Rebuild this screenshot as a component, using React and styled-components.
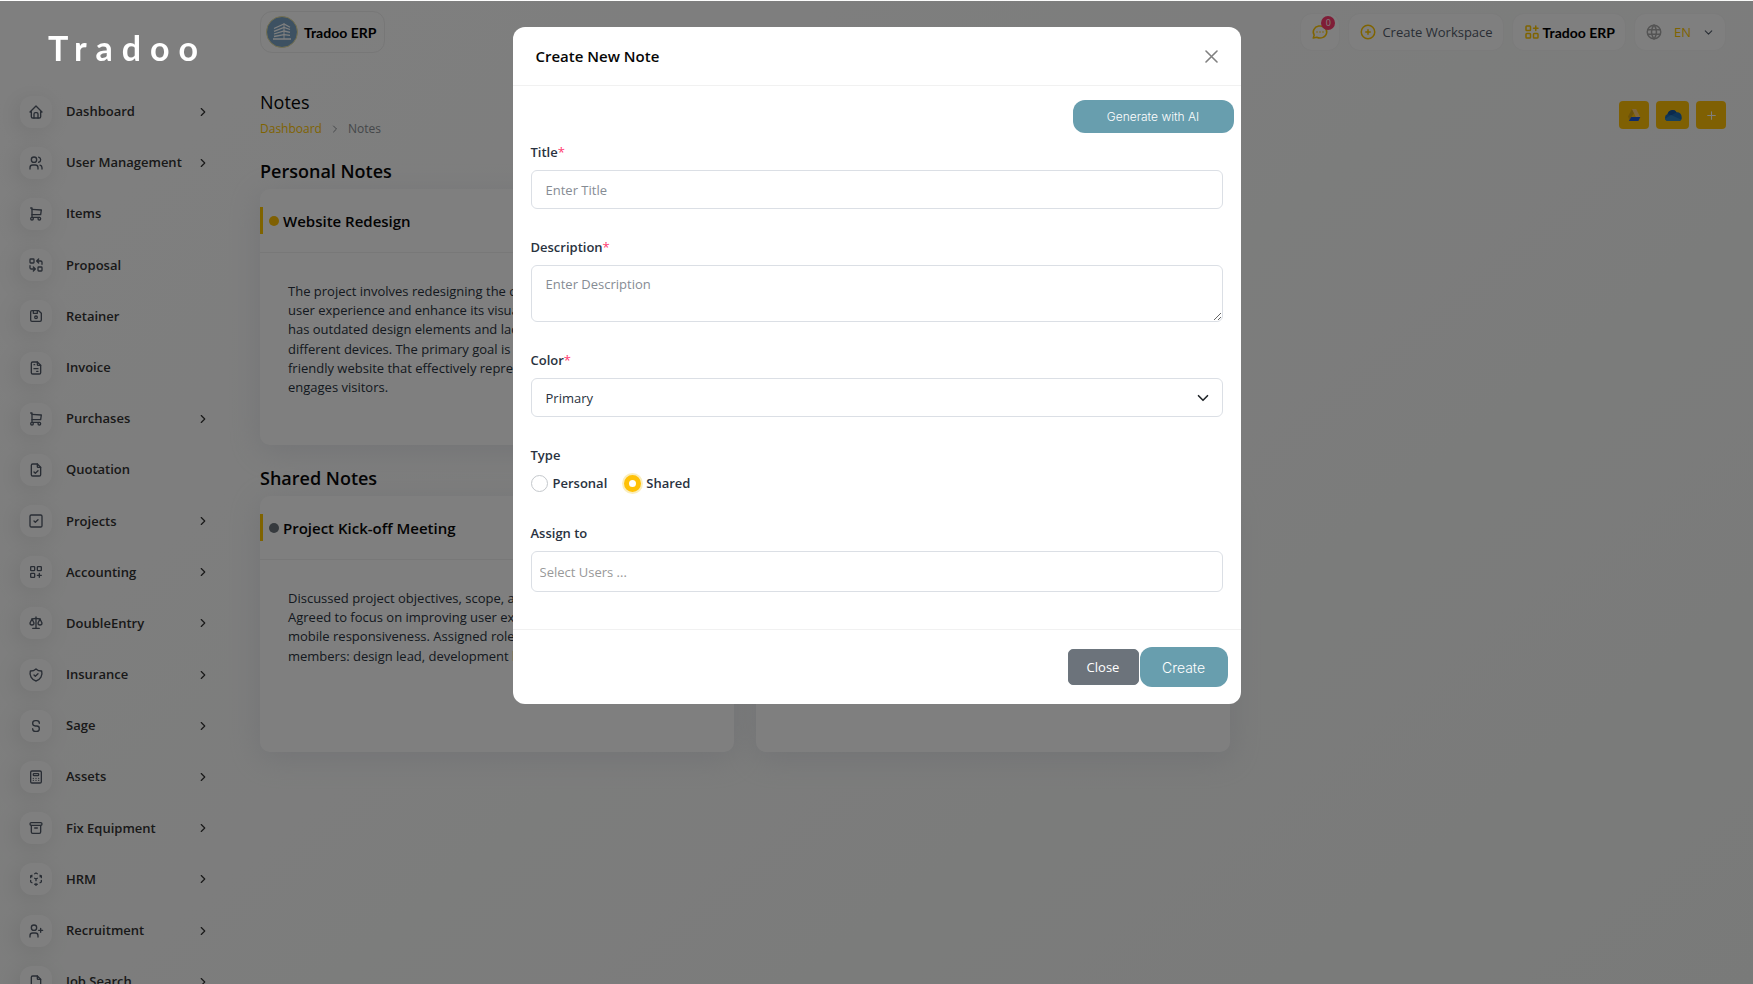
import React, { useState } from 'react';
import styled, { createGlobalStyle } from 'styled-components';
import {
  TbHome,
  TbUsers,
  TbShoppingCart,
  TbReplace,
  TbDeviceFloppy,
  TbFileInvoice,
  TbFileCheck,
  TbSquareCheck,
  TbLayoutGridAdd,
  TbScale,
  TbLetterS,
  TbCalculator,
  TbArchive,
  TbFile,
  TbChevronRight,
  TbChevronDown,
  TbCirclePlus,
  TbApps,
  TbWorld,
  TbPlus,
} from 'react-icons/tb';

const GlobalStyle = createGlobalStyle`
  * {
    box-sizing: border-box;
  }

  body {
    margin: 0;
    font-family: 'Open Sans', 'Noto Sans', sans-serif;
    font-size: 13px;
    color: #293240;
    background-color: #f4fbf7;
  }

  button, input, select, textarea {
    font-family: inherit;
    font-size: 13px;
  }

  h1, h2, h3, p, ul, ol {
    margin: 0;
    padding: 0;
    font-weight: 400;
  }
`;

const Shell = styled.div`
  display: flex;
  height: 100vh;
  overflow: hidden;
  background: linear-gradient(141deg, #ffffff 4%, #f3f5f3 100%);
`;

const Sidebar = styled.aside`
  width: 232px;
  flex-shrink: 0;
  padding-left: 20px;
  overflow: hidden;
`;

const Logo = styled.div`
  height: 86px;
  padding: 22px 0 0 28px;
  font-family: Lato, sans-serif;
  font-size: 34px;
  font-weight: 700;
  line-height: 52px;
  letter-spacing: 9px;
  color: #ffffff;
  position: relative;
  z-index: 20;
`;

const NavList = styled.ul`
  list-style: none;
`;

const NavLink = styled.a`
  display: flex;
  align-items: center;
  gap: 14px;
  color: #333333;
  text-decoration: none;
  padding-right: 22px;

  & > svg {
    width: 14px;
    height: 14px;
  }
`;

const NavTile = styled.span`
  display: flex;
  align-items: center;
  justify-content: center;
  width: 32px;
  height: 32px;
  border-radius: 12px;
  background-color: #ffffff;
  color: #525b69;
  box-shadow: -3px 4px 23px rgba(0, 0, 0, 0.1);

  svg {
    width: 16px;
    height: 16px;
  }
`;

const NavText = styled.span`
  flex: 1;
  min-width: 0;
  padding: 16px 0 17px;
  font-weight: 600;
  line-height: 1.4;
  white-space: nowrap;
`;

const Main = styled.main`
  flex: 1;
  min-width: 0;
  padding: 11px 27px 0 28px;
`;

const TopBar = styled.header`
  display: flex;
  align-items: center;
  gap: 8px;
`;

const Pill = styled.button`
  display: flex;
  align-items: center;
  gap: ${(props) => (props.$snug ? 2 : 5)}px;
  height: 38px;
  padding: 0 10px;
  border: 1px solid #f6f6f6;
  border-radius: 12px;
  background-color: ${(props) => (props.$clear ? 'transparent' : '#ffffff')};
  color: #525b69;
  cursor: pointer;

  svg {
    width: 18px;
    height: 18px;
    color: #ffc700;
  }
`;

const CompanyPill = styled(Pill)`
  gap: 6px;
  height: 42px;
  padding: 0 8px 0 5px;
  margin-right: auto;
  border-color: #efefef;

  svg {
    width: 32px;
    height: 32px;
  }
`;

const BrandText = styled.span`
  font-family: Lato, sans-serif;
  font-weight: 700;
  font-size: 14px;
  color: #000000;
`;

const ChatPill = styled(Pill)`
  position: relative;
  width: 40px;
  justify-content: center;
`;

const Badge = styled.span`
  position: absolute;
  top: 2px;
  right: 4px;
  width: 14px;
  height: 14px;
  border-radius: 50%;
  background-color: #ff3a6e;
  color: #ffffff;
  font-size: 9px;
  line-height: 14px;
`;

const LangPill = styled(Pill)`
  gap: 11px;
  color: #ffc700;

  svg:first-child {
    color: #a8a8a8;
  }

  svg:last-child {
    width: 13px;
    height: 13px;
    color: #525b69;
  }
`;

const PageHead = styled.div`
  display: flex;
  justify-content: space-between;
  align-items: center;
  margin-top: 36px;
`;

const PageTitle = styled.h1`
  font-size: 18px;
  font-weight: 500;
  line-height: 27px;
  color: #060606;
`;

const Breadcrumb = styled.ol`
  display: flex;
  align-items: center;
  gap: 7px;
  list-style: none;
  font-size: 12px;
  line-height: 25px;
  color: #8a8f94;

  a {
    color: #ffc700;
    text-decoration: none;
  }

  li {
    display: flex;
  }
`;

const Actions = styled.div`
  display: flex;
  gap: 7px;
`;

const ActionButton = styled.button`
  display: flex;
  align-items: center;
  justify-content: center;
  width: ${(props) => (props.$wide ? 33 : 30)}px;
  height: 28px;
  border: none;
  border-radius: 4px;
  background-color: #ffc107;
  color: #ffffff;
  cursor: pointer;
  padding: 0;
`;

const SectionTitle = styled.h2`
  margin-top: ${(props) => (props.$first ? 15 : 18)}px;
  font-size: 18px;
  font-weight: 600;
  line-height: 30px;
  color: #060606;
`;

const CardGrid = styled.div`
  display: grid;
  grid-template-columns: repeat(3, 1fr);
  gap: 22px;
  margin-top: 3px;
`;

const Card = styled.article`
  height: 256px;
  border-radius: 10px;
  background-color: #ffffff;
  box-shadow: 0 6px 30px rgba(182, 186, 203, 0.3);
`;

const CardHead = styled.div`
  display: flex;
  align-items: center;
  height: 64px;
  border-bottom: 1px solid #f1f1f1;
`;

const CardTitle = styled.h3`
  display: flex;
  align-items: center;
  gap: 4px;
  height: 27px;
  padding-left: 6px;
  border-left: 3px solid #ffc700;
  font-size: 15px;
  font-weight: 600;
  color: #060606;
`;

const Dot = styled.span`
  width: 10px;
  height: 10px;
  border-radius: 50%;
  background-color: ${(props) => props.$color};
`;

const CardText = styled.p`
  padding: 29px 28px 0;
  line-height: 1.48;
  color: #293240;
`;

const Overlay = styled.div`
  position: fixed;
  inset: 1px 0 0;
  z-index: 10;
  padding: 26px 16px;
  background-color: rgba(0, 0, 0, 0.5);
`;

const Modal = styled.div`
  max-width: 728px;
  margin: 0 auto;
  border-radius: 12px;
  background-color: #ffffff;
`;

const ModalHead = styled.div`
  display: flex;
  align-items: center;
  justify-content: space-between;
  height: 59px;
  padding: 0 23px;
  border-bottom: 1px solid #f1f1f1;
`;

const ModalTitle = styled.h2`
  font-size: 15px;
  font-weight: 600;
  color: #060606;
`;

const CloseIcon = styled.button`
  display: flex;
  padding: 0;
  border: none;
  background: none;
  color: #808080;
  cursor: pointer;
`;

const ModalBody = styled.form`
  display: flex;
  flex-direction: column;
  padding: 14px 18px 37px;
`;

const TealButton = styled.button`
  border: none;
  border-radius: 12px;
  background-color: #689eae;
  color: #ffffff;
  font-family: Inter, sans-serif;
  font-weight: 300;
  cursor: pointer;
`;

const GenerateButton = styled(TealButton)`
  align-self: flex-end;
  width: 161px;
  height: 33px;
  margin-right: -11px;
  font-size: 12px;
`;

const Field = styled.div`
  display: flex;
  flex-direction: column;
  margin-top: ${(props) => (props.$first ? 9 : 28)}px;
`;

const Label = styled.label`
  font-weight: 600;
  line-height: 21px;
  margin-bottom: 7px;
  color: #293240;
`;

const Required = styled.span`
  color: #ff3a6e;
  font-weight: 400;
`;

const TextInput = styled.input`
  width: 100%;
  height: ${(props) => (props.$tight ? 41 : 39)}px;
  padding: 0 ${(props) => (props.$tight ? 8 : 14)}px;
  border: 1px solid #dbdfe5;
  border-radius: 6px;
  color: #293240;
  outline: none;

  &::placeholder {
    color: ${(props) => (props.$tight ? '#999999' : '#868c94')};
  }
`;

const TextArea = styled.textarea`
  width: 100%;
  height: 57px;
  padding: 8px 14px;
  border: 1px solid #dbdfe5;
  border-radius: 6px;
  line-height: 20px;
  color: #293240;
  outline: none;
  resize: vertical;

  &::placeholder {
    color: #868c94;
  }
`;

const SelectBox = styled.div`
  position: relative;

  svg {
    position: absolute;
    right: 14px;
    top: 14px;
    pointer-events: none;
  }
`;

const Select = styled.select`
  width: 100%;
  height: 39px;
  padding: 0 14px;
  border: 1px solid #dbdfe5;
  border-radius: 6px;
  background-color: #ffffff;
  color: #293240;
  appearance: none;
`;

const RadioGroup = styled.fieldset`
  border: none;
  margin: 28px 0 2px;
  padding: 0;
  min-width: 0;

  legend {
    padding: 0;
    font-weight: 600;
    line-height: 21px;
  }
`;

const RadioRow = styled.div`
  display: flex;
  gap: 17px;
  margin-top: 7px;
`;

const RadioLabel = styled.label`
  display: flex;
  align-items: center;
  gap: 5px;
  font-weight: 600;
  line-height: 20px;
`;

const Radio = styled.input`
  appearance: none;
  width: 17px;
  height: 17px;
  margin: 0;
  border: 1px solid #c4c8cc;
  border-radius: 50%;
  background-color: #ffffff;

  &:checked {
    border: 5px solid #ffc107;
    box-shadow: 0 0 0 2px #faeebd;
  }
`;

const ModalFoot = styled.div`
  display: flex;
  align-items: center;
  justify-content: flex-end;
  gap: 1px;
  height: 75px;
  padding: 0 13px;
  border-top: 1px solid #f1f1f1;
`;

const CloseButton = styled.button`
  width: 71px;
  height: 36px;
  border: 1px solid #6c757d;
  border-radius: 5px;
  background-color: #6c737b;
  color: #ffffff;
  font-weight: 500;
  cursor: pointer;
`;

const CreateButton = styled(TealButton)`
  width: 88px;
  height: 40px;
  font-size: 14px;
`;

const OutlineIcon = ({ children }) => (
  <svg viewBox="0 0 24 24" fill="none" stroke="currentColor" strokeWidth="2" strokeLinecap="round" strokeLinejoin="round" aria-hidden="true">
    {children}
  </svg>
);

const CubeIcon = () => (
  <OutlineIcon>
    <path d="M6 17.6l-2 -1.1v-2.5M4 10v-2.5l2 -1.1M10 4.1l2 -1.1l2 1.1M18 6.4l2 1.1v2.5M20 14v2.5l-2 1.1M14 19.9l-2 1.1l-2 -1.1" />
    <path d="M12 12l2 -1.1M18 8.6l2 -1.1M12 12v2.5M12 18.5v2.5M12 12l-2 -1.1M6 8.6l-2 -1.1" />
  </OutlineIcon>
);

const ShieldIcon = () => (
  <OutlineIcon>
    <path d="M9 12l2 2l4 -4" />
    <path d="M12 3a12 12 0 0 0 8.5 3a12 12 0 0 1 -8.5 15a12 12 0 0 1 -8.5 -15a12 12 0 0 0 8.5 -3" />
  </OutlineIcon>
);

const UserPlusIcon = () => (
  <OutlineIcon>
    <circle cx="9" cy="7" r="4" />
    <path d="M3 21v-2a4 4 0 0 1 4 -4h4a4 4 0 0 1 4 4v2" />
    <path d="M16 11h6m-3 -3v6" />
  </OutlineIcon>
);

const ChatIcon = () => (
  <OutlineIcon>
    <path d="M3 20l1.3 -3.9a9 8 0 1 1 3.4 2.9l-4.7 1" />
    <path d="M12 12v.01M8 12v.01M16 12v.01" />
  </OutlineIcon>
);

const CompanyLogo = () => (
  <svg viewBox="0 0 32 32" aria-hidden="true">
    <circle cx="16" cy="16" r="15.5" fill="#7ba3c4" stroke="#e8dfa0" strokeWidth="1" />
    <g fill="none" stroke="#ffffff" strokeWidth="1.3">
      <path d="M8 12.5 18 8l6 3.2M8 15.3 18 11.5l6 2M8 18 18 15l6 1.3M8 20.5l10-1.8 6 .6M7 23h18" />
      <path d="M18 7.5V23" strokeWidth="1" />
    </g>
  </svg>
);

const DriveIcon = () => (
  <svg width="14" height="14" viewBox="0 0 14 14" aria-hidden="true">
    <path d="M5 1 1 8.6l1.4 3.4L7.4 4.6z" fill="#d9a514" />
    <path d="M5 1h4.2l4 8H8.8z" fill="#ffcb78" />
    <path d="M4.2 9h9.2l-2 4H1.8z" fill="#1d56d6" />
  </svg>
);

const CloudIcon = () => (
  <svg width="18" height="12" viewBox="0 0 18 12" aria-hidden="true">
    <path d="M3.6 5A5 5 0 0 1 12.6 3.2 4.4 4.4 0 0 1 17.6 8 3 3 0 0 1 15 12H4A3.6 3.6 0 0 1 3.6 5z" fill="#1f6aae" />
    <path d="M3.6 5A5 5 0 0 1 12.6 3.2L7 6.6z" fill="#17549a" />
    <path d="M7 6 17 10.6A3 3 0 0 1 15 12H4a3.6 3.6 0 0 1-3.2-2z" fill="#2f80bd" />
  </svg>
);

const navItems = [
  { name: 'Dashboard', icon: TbHome, more: true },
  { name: 'User Management', icon: TbUsers, more: true },
  { name: 'Items', icon: TbShoppingCart },
  { name: 'Proposal', icon: TbReplace },
  { name: 'Retainer', icon: TbDeviceFloppy },
  { name: 'Invoice', icon: TbFileInvoice },
  { name: 'Purchases', icon: TbShoppingCart, more: true },
  { name: 'Quotation', icon: TbFileCheck },
  { name: 'Projects', icon: TbSquareCheck, more: true },
  { name: 'Accounting', icon: TbLayoutGridAdd, more: true },
  { name: 'DoubleEntry', icon: TbScale, more: true },
  { name: 'Insurance', icon: ShieldIcon, more: true },
  { name: 'Sage', icon: TbLetterS, more: true },
  { name: 'Assets', icon: TbCalculator, more: true },
  { name: 'Fix Equipment', icon: TbArchive, more: true },
  { name: 'HRM', icon: CubeIcon, more: true },
  { name: 'Recruitment', icon: UserPlusIcon, more: true },
  { name: 'Job Search', icon: TbFile, more: true },
];

const CardItem = ({ title, color, text }) => (
  <Card>
    <CardHead>
      <CardTitle>
        <Dot $color={color} />
        {title}
      </CardTitle>
    </CardHead>
    <CardText>{text}</CardText>
  </Card>
);

const NoteModal = () => {
  const [type, setType] = useState('shared');

  return (
    <Overlay>
      <Modal role="dialog" aria-labelledby="modal-title">
        <ModalHead>
          <ModalTitle id="modal-title">Create New Note</ModalTitle>
          <CloseIcon type="button" aria-label="Close dialog">
            <svg width="13" height="13" viewBox="0 0 13 13" fill="none" stroke="currentColor" strokeWidth="1.6" strokeLinecap="round">
              <path d="M1 1l11 11M12 1L1 12" />
            </svg>
          </CloseIcon>
        </ModalHead>
        <ModalBody id="note-form" onSubmit={(e) => e.preventDefault()}>
          <GenerateButton type="button">Generate with AI</GenerateButton>
          <Field $first>
            <Label htmlFor="title">Title<Required>*</Required></Label>
            <TextInput id="title" type="text" placeholder="Enter Title" />
          </Field>
          <Field>
            <Label htmlFor="description">Description<Required>*</Required></Label>
            <TextArea id="description" placeholder="Enter Description" />
          </Field>
          <Field>
            <Label htmlFor="color">Color<Required>*</Required></Label>
            <SelectBox>
              <Select id="color" defaultValue="primary">
                <option value="primary">Primary</option>
              </Select>
              <svg width="12" height="12" viewBox="0 0 16 16" fill="none" stroke="#212529" strokeWidth="2.2" strokeLinecap="round" strokeLinejoin="round">
                <path d="M2 5l6 6 6-6" />
              </svg>
            </SelectBox>
          </Field>
          <RadioGroup>
            <legend>Type</legend>
            <RadioRow>
              <RadioLabel>
                <Radio type="radio" name="type" checked={type === 'personal'} onChange={() => setType('personal')} />
                Personal
              </RadioLabel>
              <RadioLabel>
                <Radio type="radio" name="type" checked={type === 'shared'} onChange={() => setType('shared')} />
                Shared
              </RadioLabel>
            </RadioRow>
          </RadioGroup>
          <Field>
            <Label htmlFor="users">Assign to</Label>
            <TextInput $tight id="users" type="text" placeholder="Select Users ..." />
          </Field>
        </ModalBody>
        <ModalFoot>
          <CloseButton type="button">Close</CloseButton>
          <CreateButton type="submit" form="note-form">Create</CreateButton>
        </ModalFoot>
      </Modal>
    </Overlay>
  );
};

const App = () => {
  return (
    <>
      <GlobalStyle />
      <Shell>
        <Sidebar>
          <Logo>Tradoo</Logo>
          <NavList>
            {navItems.map(({ name, icon: Icon, more }) => (
              <li key={name}>
                <NavLink href="#">
                  <NavTile><Icon /></NavTile>
                  <NavText>{name}</NavText>
                  {more && <TbChevronRight />}
                </NavLink>
              </li>
            ))}
          </NavList>
        </Sidebar>
        <Main>
          <TopBar>
            <CompanyPill type="button" $clear>
              <CompanyLogo />
              <BrandText>Tradoo ERP</BrandText>
            </CompanyPill>
            <ChatPill type="button" aria-label="Messages">
              <ChatIcon />
              <Badge>0</Badge>
            </ChatPill>
            <Pill type="button">
              <TbCirclePlus />
              Create Workspace
            </Pill>
            <Pill type="button" $snug>
              <TbApps />
              <BrandText>Tradoo ERP</BrandText>
            </Pill>
            <LangPill type="button">
              <TbWorld />
              EN
              <TbChevronDown />
            </LangPill>
          </TopBar>
          <PageHead>
            <div>
              <PageTitle>Notes</PageTitle>
              <Breadcrumb>
                <li><a href="#">Dashboard</a></li>
                <li><TbChevronRight /></li>
                <li>Notes</li>
              </Breadcrumb>
            </div>
            <Actions>
              <ActionButton type="button" aria-label="Google Drive"><DriveIcon /></ActionButton>
              <ActionButton type="button" aria-label="OneDrive" $wide><CloudIcon /></ActionButton>
              <ActionButton type="button" aria-label="Create"><TbPlus /></ActionButton>
            </Actions>
          </PageHead>
          <SectionTitle $first>Personal Notes</SectionTitle>
          <CardGrid>
            <CardItem
              title="Website Redesign"
              color="#ffc107"
              text="The project involves redesigning the company website to improve user experience and enhance its visual appeal. The current website has outdated design elements and lacks responsiveness across different devices. The primary goal is to create a modern and user-friendly website that effectively represents the company's brand and engages visitors."
            />
          </CardGrid>
          <SectionTitle>Shared Notes</SectionTitle>
          <CardGrid>
            <CardItem
              title="Project Kick-off Meeting"
              color="#6c757d"
              text="Discussed project objectives, scope, and timeline with the team. Agreed to focus on improving user experience, visual design, and mobile responsiveness. Assigned roles and responsibilities to team members: design lead, development lead, and content lead."
            />
            <Card />
          </CardGrid>
        </Main>
      </Shell>
      <NoteModal />
    </>
  );
};

export default App;
